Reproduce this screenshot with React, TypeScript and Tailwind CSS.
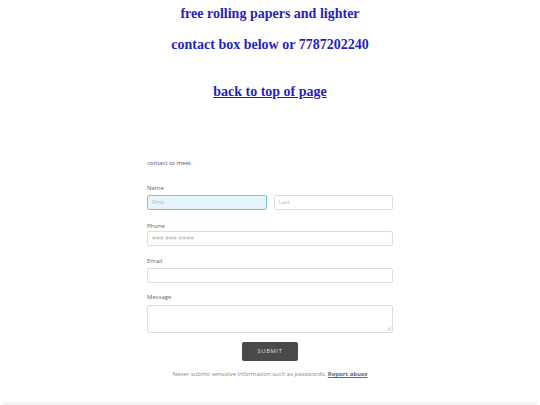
import React from "react";

export default function App() {
  return (
    <div className="w-[540px] h-[405px] bg-white overflow-hidden relative">
      <div className="flex flex-col items-center pt-[5px]" style={{ fontFamily: '"Liberation Serif", "Times New Roman", serif' }}>
        <h1 className="text-[14px] leading-[18px] font-bold text-[#1f1fc8]">free rolling papers and lighter</h1>
        <h1 className="mt-[13px] text-[14px] leading-[18px] font-bold text-[#1f1fc8]">contact box below or 7787202240</h1>
        <a href="#" className="mt-[29px] text-[14px] leading-[18px] font-bold text-[#1f1fc8] underline">back to top of page</a>
      </div>
      <div className="w-[246px] ml-[147px] mt-[58px] text-[#555]" style={{ fontFamily: '"Open Sans", sans-serif' }}>
        <p className="text-[6px] leading-[9px] text-[#555]">contact to meet.</p>
        <label className="block mt-[16px] text-[6px] leading-[9px] text-[#666]">Name</label>
        <div className="mt-[2px] flex gap-[7px]">
          <div className="flex-1 h-[15px] border border-[#7dc3d9] bg-[#e6f4fb] rounded-[2px] px-[4px] flex items-center text-[6px] text-[#b0b8bc]">First</div>
          <div className="flex-1 h-[15px] border border-[#ddd] bg-white rounded-[2px] px-[4px] flex items-center text-[6px] text-[#bbb]">Last</div>
        </div>
        <label className="block mt-[12px] text-[6px] leading-[9px] text-[#666]">Phone</label>
        <div className="mt-[0px] h-[15px] border border-[#ddd] rounded-[2px] px-[4px] flex items-center text-[6px] text-[#bbb]">### ### ####</div>
        <label className="block mt-[11px] text-[6px] leading-[9px] text-[#666]">Email</label>
        <div className="mt-[2px] h-[15px] border border-[#ddd] rounded-[2px]"></div>
        <label className="block mt-[10px] text-[6px] leading-[9px] text-[#666]">Message</label>
        <div className="mt-[3px] h-[28px] border border-[#ddd] rounded-[2px] relative">
          <svg className="absolute right-[1px] bottom-[1px]" width="4" height="4" viewBox="0 0 4 4">
            <path d="M4 0L0 4M4 2L2 4" stroke="#999" strokeWidth="0.5" />
          </svg>
        </div>
        <div className="mt-[9px] flex justify-center">
          <div className="w-[56px] h-[19px] bg-[#4a4a4a] rounded-[2px] flex items-center justify-center text-[6px] tracking-[0.5px] text-[#ddd]">SUBMIT</div>
        </div>
        <p className="mt-[9px] text-center text-[6px] leading-[8px] text-[#888] whitespace-nowrap">
          Never submit sensitive information such as passwords. <span className="font-bold underline text-[#666]">Report abuse</span>
        </p>
      </div>
      <div className="absolute left-[3px] right-[3px] bottom-[0px] h-[3px] bg-[#f3f3f3]"></div>
    </div>
  );
}
